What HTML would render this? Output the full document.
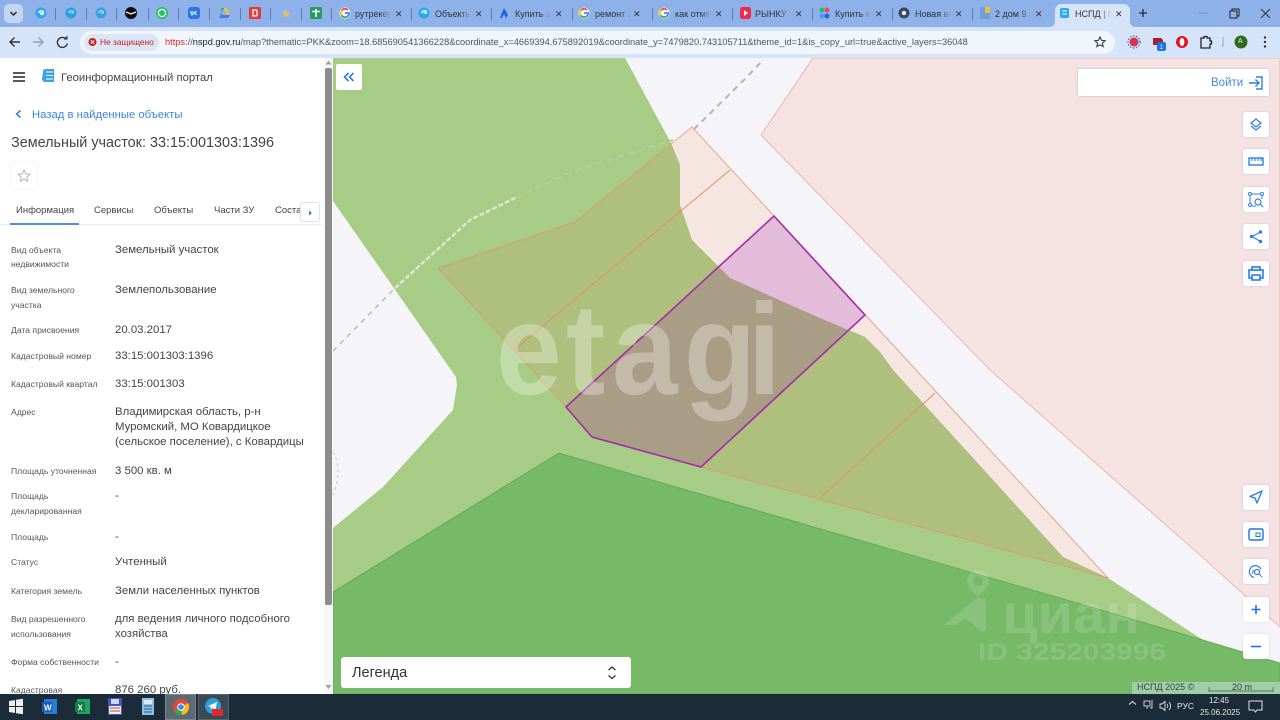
<!DOCTYPE html>
<html lang="ru"><head><meta charset="utf-8"><title>НСПД</title>
<style>
html,body{margin:0;padding:0;width:1280px;height:720px;overflow:hidden;background:#fff;font-family:"Liberation Sans",sans-serif}
body{filter:blur(.3px)}
.a{position:absolute;white-space:nowrap}
.l{position:absolute;left:11px;font-size:8.600px;line-height:14px;color:#555;white-space:nowrap}
.v{position:absolute;left:115px;font-size:11.400px;line-height:14px;color:#444;white-space:nowrap}
.tt{position:absolute;top:8px;font-size:9px;line-height:12px;color:#333;white-space:nowrap;overflow:hidden;width:36px;-webkit-mask-image:linear-gradient(90deg,#000 70%,transparent)}
.x{position:absolute;top:8px;font-size:9px;line-height:12px;color:#333}
.sep{position:absolute;top:8px;width:1px;height:12px;background:#5f7fb5}
.fb{position:absolute;left:1243px;width:26px;height:25px;background:#fff;border-radius:3px;box-shadow:0 0 2px rgba(90,120,170,.3)}
.fb svg{position:absolute;left:0;top:0}
.tab{position:absolute;top:204px;font-size:9.500px;line-height:14px;color:#444;white-space:nowrap}
</style></head><body>

<!-- chrome -->
<div class="a" style="left:0;top:0;width:1280px;height:27px;background:#8fb1ea"></div>
<div class="a" style="left:0;top:27px;width:1280px;height:31px;background:#d6e4f9"></div>
<div class="a" style="left:4px;top:4px;width:19px;height:19px;background:#c3d5f3;border-radius:5px"></div>
<svg class="a" style="left:0;top:0" width="1280" height="58" viewBox="0 0 1280 58">
<defs><g id="G" fill="none" stroke-width="1.700"><path d="M-3.200-2.600A4.200 4.200 0 0 1 3-3" stroke="#ea4335"/><path d="M-3.200-2.600A4.200 4.200 0 0 0-3.400 2.400" stroke="#fbbc05"/><path d="M-3.400 2.400A4.200 4.200 0 0 0 3 3" stroke="#34a853"/><path d="M3 3A4.200 4.200 0 0 0 4.200 0H0" stroke="#4285f4"/></g></defs>
<path d="M10.500 12l3 3 3-3" fill="none" stroke="#222" stroke-width="1.400"/>
<!-- pinned -->
<circle cx="41" cy="13" r="5.500" fill="#29a9ea"/><path d="M38.500 13c1-3 5-3 5 0h-3c0 1.500 2 2 3 1" fill="none" stroke="#fff" stroke-width="1.200"/>
<circle cx="71" cy="13" r="5.500" fill="#2c9fe4"/><path d="M68.500 13c1-3 5-3 5 0h-3" fill="none" stroke="#bfe6fa" stroke-width="1"/>
<circle cx="101" cy="13" r="5.500" fill="#3aa3dd"/><path d="M98.500 13c1-3 5-3 5 0h-3" fill="none" stroke="#bfe6fa" stroke-width="1"/>
<circle cx="131" cy="13" r="6" fill="#0b0b0b"/><path d="M126 12l5 2 5-2" stroke="#d8d8d8" stroke-width="1.500" fill="none"/>
<circle cx="162" cy="13" r="6" fill="#25c265"/><circle cx="162" cy="13" r="3.600" fill="none" stroke="#fff" stroke-width="1.200"/>
<rect x="188" y="7" width="12" height="12" rx="3" fill="#2a76e8"/><path d="M190.500 11l1.500 4 1-1v-3M196.500 11l-2 2 2 2" stroke="#fff" fill="none"/>
<path d="M224 8l2.500 0 3.500 7-2 3z" fill="#f2c230"/><path d="M221.500 8h2.500l-4 7 1.500 3z" fill="#2c9f5a"/><path d="M219 18l2-3h9l-2 3z" fill="#3f7de8"/>
<rect x="249" y="7" width="12" height="12" rx="1.500" fill="#e23b3b"/><path d="M253 10h3a1 1 0 0 1 1 1v4a1 1 0 0 1-1 1h-3z" fill="none" stroke="#fff" stroke-width="1.300"/>
<path d="M286 9l1.500 3 3 .5-2.500 2 .8 3-2.800-1.500-2.800 1.500.8-3-2.500-2 3-.5z" fill="#f0c64a" opacity=".8"/>
<rect x="310" y="7" width="12" height="12" rx="1.500" fill="#2c9a5e"/><path d="M316 9v8M312 11.500h8" stroke="#fff" stroke-width="1.500"/>
<!-- tab favicons -->
<circle cx="345" cy="13" r="5.500" fill="#f4f7fc"/><use href="#G" x="345" y="13"/>
<circle cx="424" cy="13" r="5.500" fill="#29a9ea"/><path d="M421.500 13c1-3 5-3 5 0h-3" fill="none" stroke="#fff" stroke-width="1.200"/>
<path d="M500 18l4-10 4 7-2 3-2-4-2 4z" fill="#1f5fd8"/>
<circle cx="584" cy="13" r="5.500" fill="#f4f7fc"/><use href="#G" x="584" y="13"/>
<circle cx="664" cy="13" r="5.500" fill="#f4f7fc"/><use href="#G" x="664" y="13"/>
<rect x="740" y="7" width="11" height="12" rx="2.500" fill="#ef2b4d"/><path d="M744 10l4 3-4 3z" fill="#fff"/>
<circle cx="822" cy="10" r="2.500" fill="#2dbb6b"/><circle cx="827" cy="10" r="2.500" fill="#ef4b5c"/><circle cx="822" cy="16" r="2.500" fill="#3fa0ee"/><circle cx="827" cy="16" r="2.500" fill="#2a5fe0"/>
<circle cx="904" cy="13" r="5.500" fill="#3a4a5c"/><circle cx="904" cy="13" r="2.200" fill="#e6edf8"/>
<rect x="980" y="7" width="10" height="12" fill="#6f9fd8"/><rect x="985" y="7" width="5" height="6" fill="#eac23c"/>
<!-- active tab -->
<path d="M1049 27c4 0 6-2 6-6V10c0-3 3-6 6-6h63c3 0 6 3 6 6v11c0 4 2 6 6 6z" fill="#d6e4f9"/>
<rect x="1060" y="8" width="9" height="10" rx="2" fill="#29a9ea"/><path d="M1062 11h5M1062 14h5" stroke="#fff"/>
<path d="M1143 9v8M1139 13h8" stroke="#1f2a3a" stroke-width="1.300"/>
<path d="M1199 13h9" stroke="#7d96c4" stroke-width="1.200"/>
<path d="M1230 11h7v7h-7zM1232 11V9h7v7h-2" fill="none" stroke="#222"/>
<path d="M1261 9l9 9M1270 9l-9 9" stroke="#333" stroke-width="1"/>
<!-- nav -->
<path d="M10 42h10M14.500 37.500L10 42l4.500 4.500" fill="none" stroke="#333" stroke-width="1.400"/>
<path d="M33 42h10M38.500 37.500L43 42l-4.500 4.500" fill="none" stroke="#8f9db5" stroke-width="1.400"/>
<path d="M66.500 39.500a5 5 0 1 0 .8 4" fill="none" stroke="#333" stroke-width="1.400"/><path d="M63.500 39.500h4v-4z" fill="#333"/>
<!-- url pill -->
<rect x="80" y="31" width="1035" height="23" rx="11.500" fill="#f1f5fc"/>
<rect x="84" y="34" width="75" height="17" rx="8.500" fill="#dbe5f6"/>
<circle cx="92.500" cy="42" r="4" fill="#c5221f"/><path d="M90.800 40.300l3.400 3.400M94.200 40.300l-3.400 3.400" stroke="#fff"/>
<path d="M1100 37l1.500 3.300 3.600.4-2.700 2.400.8 3.500-3.200-1.800-3.200 1.800.8-3.500-2.700-2.400 3.600-.4z" fill="none" stroke="#333"/>
<!-- extensions -->
<circle cx="1134" cy="42" r="4.500" fill="#d8344a"/><circle cx="1134" cy="42" r="6" fill="none" stroke="#3a63c8" stroke-width="1.200" stroke-dasharray="1.500 1.500"/>
<path d="M1153 38h8l2 2v5h-10z" fill="#a81e2d"/><rect x="1157" y="42" width="9" height="9" rx="2" fill="#1a73e8"/>
<circle cx="1182" cy="42" r="6" fill="#e3141c"/><ellipse cx="1182" cy="42" rx="2.400" ry="4" fill="#fff"/>
<path d="M1201 38h3v-1.500h3V38h3v3h1.500v3H1210v4h-9z" fill="none" stroke="#222" stroke-width="1.300"/>
<path d="M1223 37v10" stroke="#8fa4c6"/>
<circle cx="1241" cy="42" r="6.500" fill="#2e6b1e"/>
<circle cx="1265" cy="37.500" r="1.200" fill="#333"/><circle cx="1265" cy="42" r="1.200" fill="#333"/><circle cx="1265" cy="46.500" r="1.200" fill="#333"/>
</svg>
<div class="a" style="left:1238px;top:38px;font-size:7px;line-height:8px;color:#e8f2e0">A</div>
<div class="a" style="left:1159.500px;top:45px;font-size:6px;line-height:6px;color:#fff">1</div>
<div class="a" style="left:100px;top:36px;font-size:8.400px;line-height:12px;color:#c5221f">Не защищено</div>
<div class="a" style="left:165px;top:36px;font-size:9.260px;line-height:12px;color:#555"><span style="color:#d93025">https</span>://<span style="color:#222">nspd.gov.ru</span>/map?thematic=PKK&amp;zoom=18.685690541366228&amp;coordinate_x=4669394.675892019&amp;coordinate_y=7479820.743105711&amp;theme_id=1&amp;is_copy_url=true&amp;active_layers=36048</div>
<div class="sep" style="left:55px"></div><div class="sep" style="left:86px"></div><div class="sep" style="left:116px"></div><div class="sep" style="left:148px"></div><div class="sep" style="left:178px"></div><div class="sep" style="left:209px"></div><div class="sep" style="left:240px"></div><div class="sep" style="left:270px"></div><div class="sep" style="left:301px"></div><div class="sep" style="left:331px"></div>
<div class="sep" style="left:411px"></div><div class="sep" style="left:491px"></div><div class="sep" style="left:572px"></div><div class="sep" style="left:652px"></div><div class="sep" style="left:732px"></div><div class="sep" style="left:812px"></div><div class="sep" style="left:892px"></div><div class="sep" style="left:972px"></div>
<div class="tt" style="left:355px">рутрекер</div><div class="x" style="left:395px">✕</div>
<div class="tt" style="left:435px">Объекты</div><div class="x" style="left:475px">✕</div>
<div class="tt" style="left:515px">Купить з</div><div class="x" style="left:555px">✕</div>
<div class="tt" style="left:595px">ремонт з</div><div class="x" style="left:633px">✕</div>
<div class="tt" style="left:675px">как отме</div><div class="x" style="left:715px">✕</div>
<div class="tt" style="left:755px">РЫНКУ т</div><div class="x" style="left:795px">✕</div>
<div class="tt" style="left:835px">Купить к</div><div class="x" style="left:875px">✕</div>
<div class="tt" style="left:915px">Новая вк</div><div class="x" style="left:955px">✕</div>
<div class="tt" style="left:995px">2 дом 9 к</div><div class="x" style="left:1035px">✕</div>
<div class="tt" style="left:1075px">НСПД | Г</div><div class="x" style="left:1115px">✕</div>

<!-- map -->
<svg class="a" style="left:0;top:0" width="1280" height="720" viewBox="0 0 1280 720">
<defs>
<clipPath id="m"><rect x="333" y="58" width="947" height="636"/></clipPath>
<clipPath id="g"><path d="M333 58H625L671 143 680 165 680 205 692 240 718 266 730 278 813 315 865 337 880 352 893 370 1063 557 1108 578 1203 640 1280 665V694H333V528L383 487 453 410 457 385 456 377 333 201Z"/></clipPath>
</defs>
<g clip-path="url(#m)">
<rect x="333" y="58" width="947" height="636" fill="#f5f5f9"/>
<path d="M813 58L761 135 990 370 1200 555 1280 627V58Z" fill="#f5e3e3" stroke="#eda999" stroke-width=".8"/>
<path d="M333 351L395 288" fill="none" stroke="#b8b8be" stroke-width="1.500" stroke-dasharray="5 5"/>
<path d="M686 137L746 78 763 60" fill="none" stroke="#b4b4ba" stroke-width="2" stroke-dasharray="6 5"/>
<path d="M333 452Q343 470 333 495" fill="none" stroke="#c8c8cc" stroke-width="1" stroke-dasharray="3 3"/>
<path d="M692 127L1108 578 701 467 592 437 566 407 438 268 575 222Z" fill="#f6e6e2"/>
<path d="M333 58H625L671 143 680 165 680 205 692 240 718 266 730 278 813 315 865 337 880 352 893 370 1063 557 1108 578 1203 640 1280 665V694H333V528L383 487 453 410 457 385 456 377 333 201Z" fill="#a6cc85"/>
<path d="M395 288L470 220 515 198" fill="none" stroke="#dbe6cf" stroke-width="2.500" stroke-dasharray="5 2"/>
<path d="M515 198L573 171 673 140" fill="none" stroke="#b2d097" stroke-width="2" stroke-dasharray="7 4"/>
<path d="M692 127L1108 578 701 467 592 437 566 407 438 268 575 222Z" fill="#afc07e" clip-path="url(#g)"/>
<path d="M333 592L559 453 800 523 1060 598 1203 640 1280 663V694H333Z" fill="#76b966" stroke="#5fa455" stroke-width=".8"/>
<path d="M692 127L1108 578 701 467 592 437 566 407 438 268 575 222Z" fill="none" stroke="#e8906f" stroke-width=".8"/>
<path d="M730 170L514 350M935 393L820 498" fill="none" stroke="#e28c66" stroke-width=".9"/>
<path d="M774 216L865 315 701 467 592 437 566 407Z" fill="#e2bcd9"/>
<path d="M774 216L865 315 701 467 592 437 566 407Z" fill="#aa9d86" clip-path="url(#g)"/>
<path d="M774 216L865 315 701 467 592 437 566 407Z" fill="none" stroke="#a32ba8" stroke-width="1.600"/>
<text transform="translate(0 394) scale(1 1.100)" x="496 566 612 684 748" y="0" font-family="'Liberation Sans',sans-serif" font-weight="700" font-size="118" fill="#fff" fill-opacity=".3">etagi</text>
<g fill="#fff" fill-opacity=".14">
<path d="M978 570a11 11 0 0 1 11 11c0 6-7 12-11 16-4-4-11-10-11-16a11 11 0 0 1 11-11zm0 6a5 5 0 1 0 0 10 5 5 0 0 0 0-10z" fill-rule="evenodd"/>
<path d="M944 625l33-27 8 0 1 14 0 19-5 0-16-13-9 7z"/>
<text x="1002" y="633" font-family="'Liberation Sans',sans-serif" font-weight="700" font-size="56" textLength="138" lengthAdjust="spacingAndGlyphs">циан</text>
<text x="978" y="660" font-family="'Liberation Sans',sans-serif" font-weight="700" font-size="24" textLength="188" lengthAdjust="spacingAndGlyphs">ID 325203996</text>
</g>
<rect x="1132" y="682" width="148" height="12" fill="#a3cfae" fill-opacity=".9"/>
<path d="M1209 687v5M1273 687v5M1209 691h64" stroke="#3c5a48" stroke-width=".7" fill="none"/>
</g>
</svg>
<div class="a" style="left:1137px;top:682px;font-size:9px;line-height:11px;color:#2f4a44">НСПД 2025 ©</div>
<div class="a" style="left:1232px;top:682px;font-size:9px;line-height:11px;color:#2f4a44">20 m</div>

<!-- side panel -->
<div class="a" style="left:0;top:58px;width:333px;height:636px;background:#fff;overflow:hidden">
<div class="a" style="left:324px;top:0;width:9px;height:636px;background:#f7f7f7"></div>
<div class="a" style="left:325px;top:10px;width:7px;height:537px;background:#8c8c8c;border-radius:2px"></div>
</div>
<svg class="a" style="left:0;top:58px" width="333" height="180" viewBox="0 0 333 180">
<path d="M328.500 2.500l3 4h-6z" fill="#a0a0a0"/>
<path d="M13 15h12M13 19h12M13 23h12" stroke="#222" stroke-width="1.400"/>
<path d="M43 14c0-2 1-3 3-3h8v13h-8c-2 0-4-1-4-3z" fill="#3aa0e8"/><path d="M46 14h7M46 17.500h7M46 21h7" stroke="#fff" stroke-width="1"/>
<path d="M20.500 52.500L16.500 56l4 3.500" fill="none" stroke="#2f7de1" stroke-width="1.500"/>
<path d="M24 112l1.700 3.800 4.200.4-3.100 2.800.9 4.100-3.700-2.100-3.700 2.100.9-4.100-3.100-2.800 4.200-.4z" fill="none" stroke="#b5b5b5" stroke-width="1"/>
</svg>
<div class="a" style="left:11px;top:162px;width:26px;height:26px;box-shadow:0 0 2px rgba(0,0,0,.1);border-radius:2px"></div>
<div class="a" style="left:61px;top:71px;font-size:11.300px;line-height:14px;color:#444">Геоинформационный портал</div>
<div class="a" style="left:32px;top:108px;font-size:11.300px;line-height:14px;color:#3d84e6">Назад в найденные объекты</div>
<div class="a" style="left:11px;top:134px;font-size:14.400px;line-height:18px;color:#444">Земельный участок: 33:15:001303:1396</div>

<div class="a" style="left:0;top:224px;width:323px;height:1px;background:#e9eef5"></div>
<div class="a" style="left:10px;top:223px;width:69px;height:2px;background:#4a8fe6"></div>
<div class="tab" style="left:16px">Информация</div>
<div class="tab" style="left:94px">Сервисы</div>
<div class="tab" style="left:154px">Объекты</div>
<div class="tab" style="left:214px">Части ЗУ</div>
<div class="tab" style="left:275px;width:48px;overflow:hidden">Состав П</div>
<div class="a" style="left:300px;top:202px;width:20px;height:20px;background:#fff;border:1px solid #d6e4f5;border-radius:3px;box-sizing:border-box"></div>
<svg class="a" style="left:300px;top:202px" width="20" height="20"><path d="M9 8.500l3 2.500-3 2.500z" fill="#2f7de1"/></svg>

<div class="l" style="top:243px">Вид объекта</div><div class="l" style="top:257px">недвижимости</div><div class="v" style="top:243px">Земельный участок</div>
<div class="l" style="top:283px">Вид земельного</div><div class="l" style="top:298px">участка</div><div class="v" style="top:283px">Землепользование</div>
<div class="l" style="top:323px">Дата присвоения</div><div class="v" style="top:323px">20.03.2017</div>
<div class="l" style="top:349px">Кадастровый номер</div><div class="v" style="top:349px">33:15:001303:1396</div>
<div class="l" style="top:377px">Кадастровый квартал</div><div class="v" style="top:377px">33:15:001303</div>
<div class="l" style="top:405px">Адрес</div><div class="v" style="top:405px">Владимирская область, р-н</div><div class="v" style="top:420px">Муромский, МО Ковардицкое</div><div class="v" style="top:435px">(сельское поселение), с Ковардицы</div>
<div class="l" style="top:464px">Площадь уточненная</div><div class="v" style="top:464px">3 500 кв. м</div>
<div class="l" style="top:489px">Площадь</div><div class="l" style="top:504px">декларированная</div><div class="v" style="top:489px">-</div>
<div class="l" style="top:530px">Площадь</div><div class="v" style="top:530px">-</div>
<div class="l" style="top:555px">Статус</div><div class="v" style="top:555px">Учтенный</div>
<div class="l" style="top:584px">Категория земель</div><div class="v" style="top:584px">Земли населенных пунктов</div>
<div class="l" style="top:612px">Вид разрешенного</div><div class="l" style="top:627px">использования</div><div class="v" style="top:612px">для ведения личного подсобного</div><div class="v" style="top:627px">хозяйства</div>
<div class="l" style="top:655px">Форма собственности</div><div class="v" style="top:655px">-</div>
<div class="l" style="top:683px">Кадастровая</div><div class="v" style="top:683px">876 260 руб.</div>
<svg class="a" style="left:324px;top:684px" width="9" height="8"><path d="M1.500 1h6l-3 4z" fill="#a0a0a0"/></svg>

<!-- map buttons -->
<div class="a" style="left:336px;top:64px;width:26px;height:26px;background:#fff;border-radius:2px"></div>
<svg class="a" style="left:336px;top:64px" width="26" height="26"><path d="M12.500 9L8.500 13l4 4M17.500 9L13.500 13l4 4" fill="none" stroke="#2f7de1" stroke-width="1.600"/></svg>
<div class="a" style="left:1078px;top:69px;width:191px;height:27px;background:#fff;border-radius:2px;box-shadow:0 0 2px rgba(90,120,170,.4)"></div>
<div class="a" style="left:1211px;top:76px;font-size:11.500px;line-height:14px;color:#4a85dc">Войти</div>
<svg class="a" style="left:1247px;top:75px" width="18" height="16"><path d="M2 8h10M8.500 4.500L12 8l-3.500 3.500M9 2h6v12H9" fill="none" stroke="#2f7de1" stroke-width="1.400"/></svg>

<div class="fb" style="top:112px"><svg width="26" height="25"><path d="M13 7l5 4-5 4-5-4z" fill="none" stroke="#2f7de1" stroke-width="1.200"/><path d="M8 14l5 4 5-4" fill="none" stroke="#2f7de1" stroke-width="1.200"/></svg></div>
<div class="fb" style="top:149px"><svg width="26" height="25"><rect x="6" y="9" width="14" height="7" fill="none" stroke="#1a73e8" stroke-width="1.300"/><path d="M9 9v3M12 9v3M15 9v3M18 9v3" stroke="#1a73e8"/></svg></div>
<div class="fb" style="top:187px"><svg width="26" height="25"><path d="M8 7h9M7 8v9M8 19h5M19 8v4" stroke="#3a7fe0" fill="none"/><circle cx="7" cy="7" r="1.500" fill="none" stroke="#3a7fe0"/><circle cx="19" cy="7" r="1.500" fill="none" stroke="#3a7fe0"/><circle cx="7" cy="18" r="1.500" fill="none" stroke="#3a7fe0"/><circle cx="15" cy="15" r="3" fill="none" stroke="#3a7fe0" stroke-width="1.200"/><path d="M17 17l3 3" stroke="#3a7fe0" stroke-width="1.200"/></svg></div>
<div class="fb" style="top:224px"><svg width="26" height="25"><path d="M17.500 8L9 12.500l8.500 5" fill="none" stroke="#2f7de1" stroke-width="1.100"/><circle cx="8.500" cy="12.500" r="1.700" fill="#2f7de1"/><circle cx="17.500" cy="8" r="1.700" fill="#2f7de1"/><circle cx="17.500" cy="17.500" r="1.700" fill="#2f7de1"/></svg></div>
<div class="fb" style="top:261px"><svg width="26" height="25"><path d="M9 9V6h8v3M9 17H6v-8h14v8h-3" fill="none" stroke="#1a73e8" stroke-width="1.500"/><rect x="9" y="14" width="8" height="5" fill="none" stroke="#1a73e8" stroke-width="1.500"/></svg></div>
<div class="fb" style="top:485px"><svg width="26" height="25"><path d="M19 6L7 11.500l5 1.500 2 5z" fill="none" stroke="#2f7de1" stroke-width="1.400" stroke-linejoin="round"/></svg></div>
<div class="fb" style="top:522px"><svg width="26" height="25"><rect x="6" y="7" width="14" height="11" rx="1.500" fill="none" stroke="#1a73e8" stroke-width="1.400"/><rect x="13" y="11" width="4" height="3.500" fill="none" stroke="#1a73e8"/></svg></div>
<div class="fb" style="top:559px"><svg width="26" height="25"><path d="M11 18.500a6 6 0 1 1 7-8" fill="none" stroke="#2f7de1" stroke-width="1.200"/><circle cx="14" cy="13" r="2.500" fill="none" stroke="#2f7de1" stroke-width="1.200"/><path d="M16 15l3 3M11 11a3 3 0 0 0-1 4" stroke="#2f7de1" fill="none"/></svg></div>
<div class="fb" style="top:597px"><svg width="26" height="25"><path d="M13 8v9M8.500 12.500h9" stroke="#1a73e8" stroke-width="1.600"/></svg></div>
<div class="fb" style="top:634px"><svg width="26" height="25"><path d="M8 12.500h10" stroke="#1a73e8" stroke-width="1.600"/></svg></div>

<div class="a" style="left:341px;top:657px;width:290px;height:31px;background:#fff;border-radius:3px"></div>
<div class="a" style="left:352px;top:664px;font-size:14.500px;line-height:18px;color:#333">Легенда</div>
<svg class="a" style="left:605px;top:665px" width="14" height="16"><path d="M3.500 5l3.500-3 3.500 3M3.500 10.500l3.500 3 3.500-3" fill="none" stroke="#333" stroke-width="1.300"/></svg>

<!-- taskbar -->
<div class="a" style="left:0;top:694px;width:1280px;height:26px;background:#1b2b38"></div>
<div class="a" style="left:165px;top:694px;width:31px;height:26px;background:#5d6973;box-shadow:inset 0 0 0 1px #7a858e"></div>
<div class="a" style="left:198px;top:694px;width:31px;height:26px;background:#3b4954;box-shadow:inset 0 0 0 1px #56626c"></div>
<svg class="a" style="left:0;top:694px" width="1280" height="26" viewBox="0 0 1280 26">
<path d="M9 7l6-1v6H9zM16 5.800l7-1V12h-7zM9 13h6v6l-6-1zM16 13h7v7.200l-7-1z" fill="#e8eef2"/>
<rect x="44" y="5" width="13" height="15" fill="#2b7cd3"/><rect x="42" y="8" width="10" height="10" fill="#185abd"/><text x="44" y="16.500" font-family="'Liberation Sans',sans-serif" font-size="8" font-weight="700" fill="#fff">W</text>
<rect x="77" y="5" width="13" height="15" fill="#21a366"/><rect x="75" y="8" width="10" height="10" fill="#107c41"/><text x="77.500" y="16.500" font-family="'Liberation Sans',sans-serif" font-size="8" font-weight="700" fill="#fff">X</text>
<rect x="108" y="4" width="14" height="17" fill="#3f55b8"/><rect x="111" y="5" width="8" height="5" fill="#cfd8f0"/><rect x="109" y="12" width="12" height="8" fill="#f1f1f1"/><path d="M110 14h10M110 17h10" stroke="#c8453c"/>
<rect x="142" y="4" width="12" height="17" fill="#8fc0ea"/><rect x="144" y="6" width="8" height="4" fill="#dfeaf4"/><path d="M144 12h8M144 15h8M144 18h8" stroke="#3f6f9e" stroke-width="1.200"/>
<circle cx="181" cy="13" r="8" fill="#e8453c"/><path d="M181 13L174 17a8 8 0 0 0 8 4z" fill="#2fa84f"/><path d="M181 13l7-4a8 8 0 0 1-6 12z" fill="#f9bc15"/><circle cx="181" cy="13" r="3.800" fill="#fff"/><circle cx="181" cy="13" r="2.800" fill="#4285f4"/>
<circle cx="213" cy="12" r="8" fill="#2a9fd8"/><path d="M208 12l9-4-1.500 8-3-2-1.500 1.500-.5-2.500z" fill="#fff"/><rect x="212" y="15" width="11" height="7" fill="#e0282e"/>
<path d="M1129 10.500l3.500-3 3.500 3" fill="none" stroke="#e8edf0"/>
<rect x="1144" y="7" width="6" height="5" fill="none" stroke="#c8ced3"/><path d="M1152 6v8h-2M1147 12v3" stroke="#c8ced3" fill="none"/>
<path d="M1160 10h2l3-2.500v9l-3-2.500h-2zM1167 10a3 3 0 0 1 0 4M1169 8a6 6 0 0 1 0 8" fill="none" stroke="#dde2e6" stroke-width=".9"/>
<path d="M1249 7h13v9h-5l-1.500 2-1.500-2h-5z" fill="none" stroke="#dfe4e8"/>
</svg>
<div class="a" style="left:1177px;top:701px;font-size:8.500px;line-height:10px;color:#e6ebee">РУС</div>
<div class="a" style="left:1209px;top:696px;font-size:8px;line-height:10px;color:#e6ebee">12:45</div>
<div class="a" style="left:1200px;top:708px;font-size:8px;line-height:10px;color:#e6ebee">25.06.2025</div>
</body></html>
